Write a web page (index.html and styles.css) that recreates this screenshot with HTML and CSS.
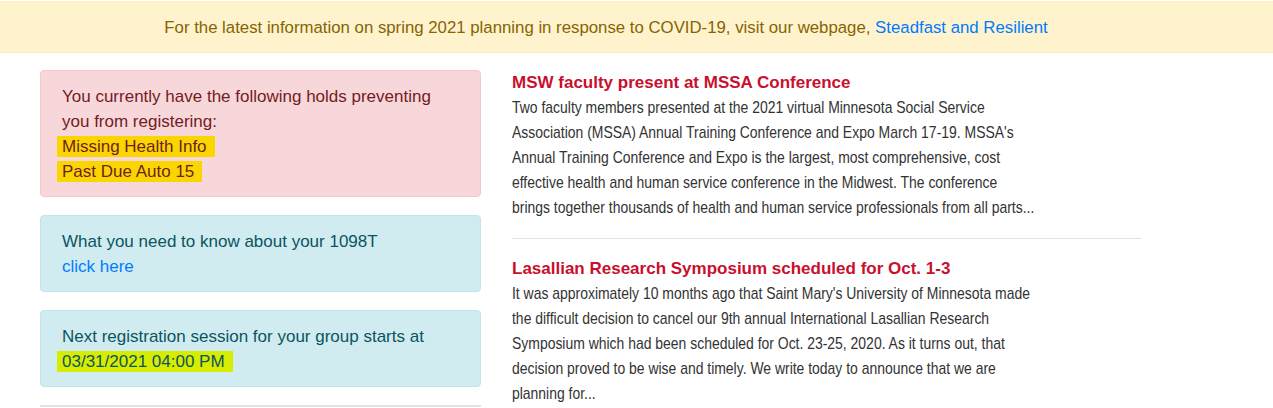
FILE: index.html
```html
<!DOCTYPE html>
<html lang="en">
<head>
<meta charset="utf-8">
<title>Student Portal</title>
<link rel="stylesheet" href="styles.css">
</head>
<body>
<div class="banner">For the latest information on spring 2021 planning in response to COVID-19, visit our webpage, <a href="#">Steadfast and Resilient</a></div>
<div class="main">
  <div class="side">
    <div class="alert alert-danger">
      You currently have the following holds preventing you from registering:<br>
      <span class="hl hl-gold">Missing Health Info</span><br>
      <span class="hl hl-gold">Past Due Auto 15</span>
    </div>
    <div class="alert alert-info">
      What you need to know about your 1098T<br>
      <a href="#">click here</a>
    </div>
    <div class="alert alert-info">
      Next registration session for your group starts at<br>
      <span class="hl hl-lime">03/31/2021 04:00 PM</span>
    </div>
    <div class="rule"></div>
  </div>
  <div class="news">
    <div class="article">
      <h3 class="title">MSW faculty present at MSSA Conference</h3>
      <p class="summary">Two faculty members presented at the 2021 virtual Minnesota Social Service Association (MSSA) Annual Training Conference and Expo March 17-19. MSSA's Annual Training Conference and Expo is the largest, most comprehensive, cost effective health and human service conference in the Midwest. The conference brings together thousands of health and human service professionals from all parts...</p>
    </div>
    <div class="article">
      <h3 class="title">Lasallian Research Symposium scheduled for Oct. 1-3</h3>
      <p class="summary">It was approximately 10 months ago that Saint Mary's University of Minnesota made the difficult decision to cancel our 9th annual International Lasallian Research Symposium which had been scheduled for Oct. 23-25, 2020. As it turns out, that decision proved to be wise and timely. We write today to announce that we are planning for...</p>
    </div>
  </div>
</div>
</body>
</html>
```
FILE: styles.css
```css
html, body {
  margin: 0;
  padding: 0;
  background: #fff;
  font-family: "Liberation Sans", Arial, sans-serif;
  font-size: 17px;
  line-height: 25px;
}
a {
  color: #007bff;
  text-decoration: none;
}
.banner {
  margin-top: 1px;
  background: #fff3cd;
  border-top: 1px solid #ffeeba;
  border-bottom: 1px solid #ffeeba;
  color: #856404;
  font-size: 16.8px;
  text-align: center;
  padding: 13px 61px 12px 0;
}
.main {
  display: flex;
  gap: 31px;
  padding: 17px 0 0 40px;
}
.side {
  width: 441px;
  flex: none;
}
.alert {
  border: 1px solid transparent;
  border-radius: 4px;
  padding: 13px 24px 12px 21px;
  margin-bottom: 18px;
}
.alert-danger {
  background: #f8d7da;
  border-color: #f5c6cb;
  color: #721c24;
}
.alert-info {
  background: #d1ecf1;
  border-color: #bee5eb;
  color: #0c5460;
}
.hl {
  padding: 1px 8px 1px 5px;
  margin-left: -5px;
}
.hl-gold {
  background: #f9d600;
}
.hl-lime {
  background: #d6ec00;
}
.rule {
  border-top: 2px solid #e3e3e3;
}
.news {
  width: 629px;
  flex: none;
}
.article {
  padding: 0 0 18px;
  border-bottom: 1px solid #e2e2e2;
}
.article + .article {
  padding-top: 17px;
  border-bottom: none;
}
.title {
  margin: 0;
  font-size: 17px;
  line-height: 25px;
  font-weight: bold;
  color: #c8102e;
}
.summary {
  margin: 0;
  width: 640px;
  color: #333;
  font-size: 17px;
  transform: scaleX(0.82);
  transform-origin: left top;
}
```
